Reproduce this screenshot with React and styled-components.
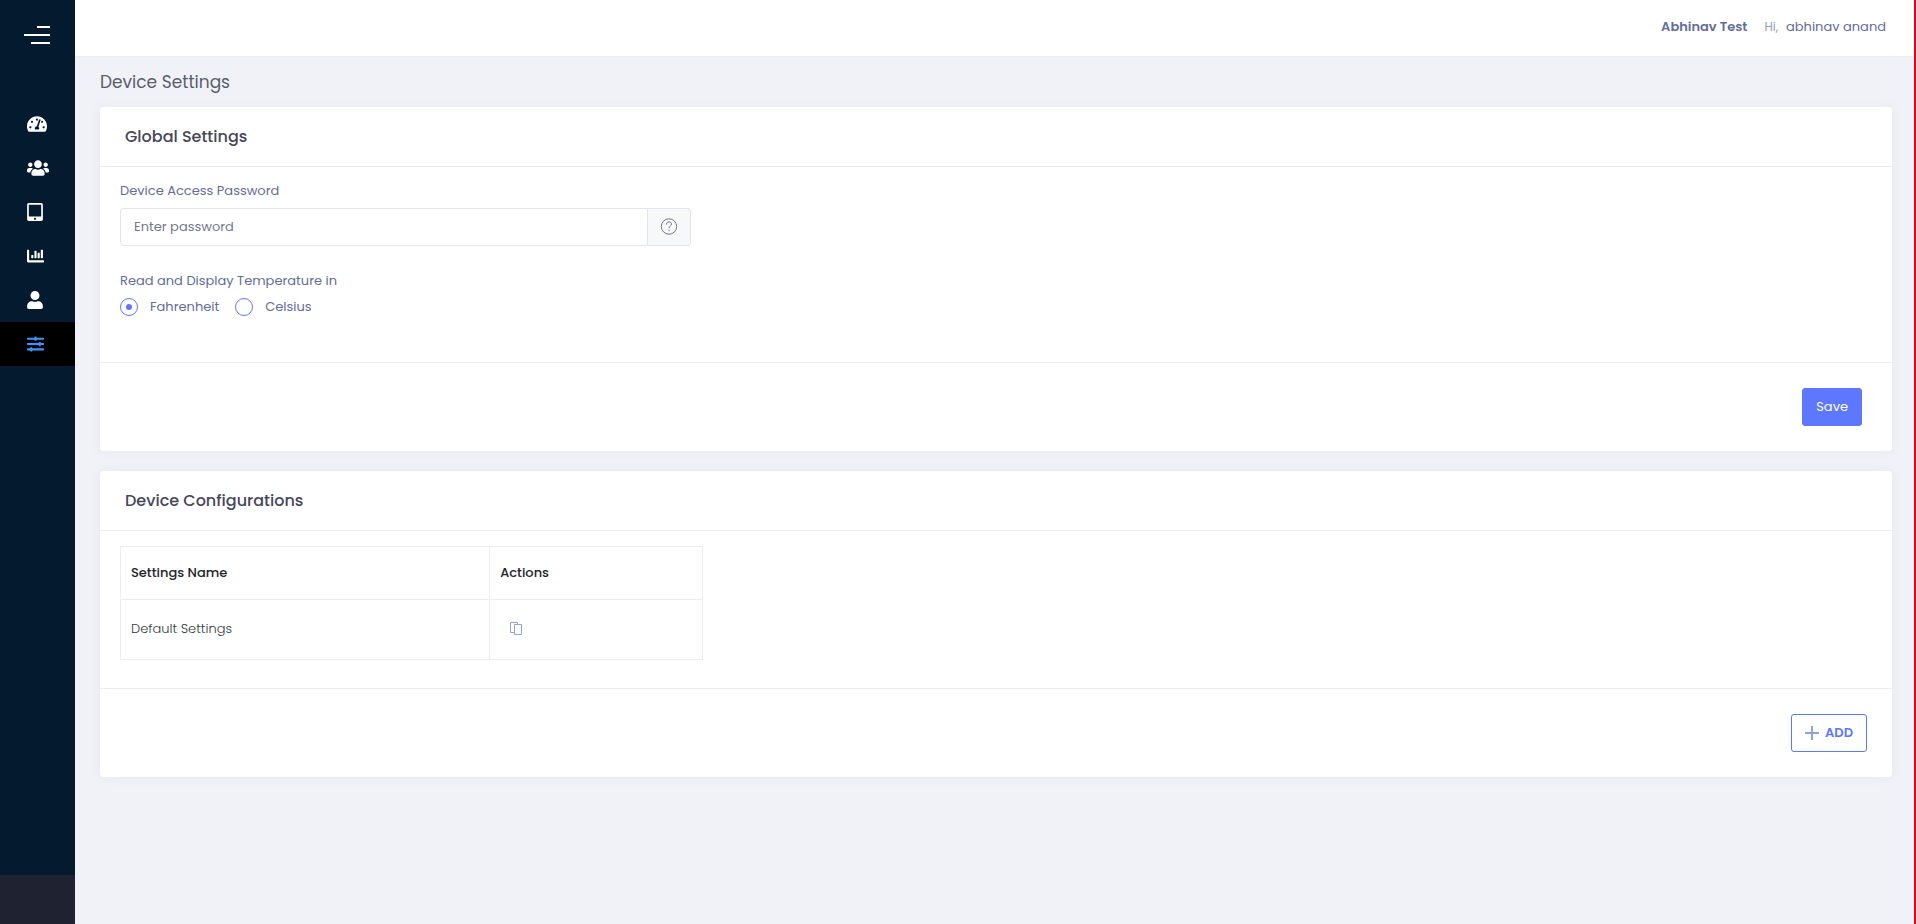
import React, { useState } from 'react';
import styled, { createGlobalStyle } from 'styled-components';
import {
  FaTachometerAlt,
  FaUsers,
  FaTabletAlt,
  FaChartBar,
  FaUser,
  FaSlidersH,
} from 'react-icons/fa';

const menuItems = [
  { id: 'dashboard', label: 'Dashboard', Icon: FaTachometerAlt, width: 20 },
  { id: 'users', label: 'Users', Icon: FaUsers, width: 22 },
  { id: 'devices', label: 'Devices', Icon: FaTabletAlt, width: 16 },
  { id: 'reports', label: 'Reports', Icon: FaChartBar, width: 17 },
  { id: 'profile', label: 'Profile', Icon: FaUser, width: 16 },
  { id: 'settings', label: 'Device Settings', Icon: FaSlidersH, width: 17 },
];

const units = ['Fahrenheit', 'Celsius'];

const configurations = [{ id: 1, name: 'Default Settings' }];

function Sidebar({ current }) {
  return (
    <StAside>
      <StToggleBtn type="button" aria-label="Toggle menu">
        <StBar $width={13} />
        <StBar $width={26} />
        <StBar $width={19} />
      </StToggleBtn>
      <StNav>
        {menuItems.map(({ id, label, Icon, width }) => (
          <StNavLink
            key={id}
            href={`#${id}`}
            aria-label={label}
            $active={id === current}
            $iconWidth={width}
          >
            <Icon />
          </StNavLink>
        ))}
      </StNav>
      <StAsideFooter />
    </StAside>
  );
}

function GlobalSettings() {
  const [password, setPassword] = useState('');
  const [unit, setUnit] = useState('Fahrenheit');

  return (
    <StCard>
      <StCardHead>
        <StCardTitle>Global Settings</StCardTitle>
      </StCardHead>
      <StForm>
        <StLabel htmlFor="password">Device Access Password</StLabel>
        <StInputGroup>
          <StInput
            id="password"
            type="password"
            placeholder="Enter password"
            value={password}
            onChange={(e) => setPassword(e.target.value)}
          />
          <StHelpBtn type="button" aria-label="Help">
            <svg width="18" height="18" viewBox="0 0 18 18" fill="none" stroke="currentColor">
              <circle cx="9" cy="8.5" r="7.7" />
              <path d="M6.5 6.7V6.1C6.5 4.7 7.5 3.9 9 3.9s2.5.8 2.5 2.1c0 1.9-2.5 1.9-2.5 4.3M9 11.7v1.5" />
            </svg>
          </StHelpBtn>
        </StInputGroup>
        <StFieldset>
          <StLegend>Read and Display Temperature in</StLegend>
          <StRadioList>
            {units.map((item) => (
              <StRadioLabel key={item}>
                <StRadio
                  type="radio"
                  name="unit"
                  checked={unit === item}
                  onChange={() => setUnit(item)}
                />
                {item}
              </StRadioLabel>
            ))}
          </StRadioList>
        </StFieldset>
      </StForm>
      <StCardFoot $right={30}>
        <StSaveBtn type="button">Save</StSaveBtn>
      </StCardFoot>
    </StCard>
  );
}

function DeviceConfigurations() {
  return (
    <StCard>
      <StCardHead>
        <StCardTitle>Device Configurations</StCardTitle>
      </StCardHead>
      <StTableWrap>
        <StTable>
          <thead>
            <tr>
              <StTh $width="63.4%">Settings Name</StTh>
              <StTh>Actions</StTh>
            </tr>
          </thead>
          <tbody>
            {configurations.map((item) => (
              <tr key={item.id}>
                <StTd>{item.name}</StTd>
                <StTd>
                  <StCopyBtn type="button" aria-label="Copy">
                    <svg width="14" height="13" viewBox="0 0 14 13" fill="none" stroke="currentColor">
                      <path d="M5 10.5H1.5V.5h7v2" />
                      <path d="M5.5 2.5h7v10h-7z" />
                    </svg>
                  </StCopyBtn>
                </StTd>
              </tr>
            ))}
          </tbody>
        </StTable>
      </StTableWrap>
      <StCardFoot $right={25}>
        <StAddBtn type="button">
          <svg width="14" height="14" viewBox="0 0 14 14" stroke="#93a2dd" strokeWidth="2">
            <path d="M0 7h14M7 0v14" />
          </svg>
          ADD
        </StAddBtn>
      </StCardFoot>
    </StCard>
  );
}

function App() {
  return (
    <StPage>
      <GlobalStyle />
      <Sidebar current="settings" />
      <StMain>
        <StTopbar>
          <StCompany>Abhinav Test</StCompany>
          <StHi>Hi,</StHi>
          <StUser>abhinav anand</StUser>
        </StTopbar>
        <StContent>
          <StPageTitle>Device Settings</StPageTitle>
          <StCards>
            <GlobalSettings />
            <DeviceConfigurations />
          </StCards>
        </StContent>
      </StMain>
    </StPage>
  );
}

export default App;

const GlobalStyle = createGlobalStyle`
  * {
    box-sizing: border-box;
  }

  body {
    margin: 0;
    background-color: #f0f2f7;
    font-family: Poppins, Inter, sans-serif;
    font-size: 13px;
    font-weight: 400;
    line-height: 20px;
    color: #646c9a;
  }

  button,
  input {
    font: inherit;
  }
`;

const StPage = styled.div`
  display: flex;
  min-height: 100vh;
  border-right: 2px solid #d90a1c;
`;

const StAside = styled.aside`
  display: flex;
  flex-direction: column;
  flex: none;
  width: 75px;
  background-color: #041b2f;
`;

const StToggleBtn = styled.button`
  display: flex;
  flex-direction: column;
  align-items: flex-end;
  gap: 6px;
  margin: 26px 25px 58px 24px;
  padding: 0;
  border: none;
  background: none;
  cursor: pointer;
`;

const StBar = styled.span`
  width: ${({ $width }) => $width}px;
  height: 2px;
  background-color: white;
`;

const StNav = styled.nav`
  display: flex;
  flex-direction: column;
  flex: 1;
`;

const StNavLink = styled.a`
  display: flex;
  align-items: center;
  height: 44px;
  padding: 0 0 1px 27px;
  color: ${({ $active }) => ($active ? '#3b97ff' : 'white')};
  background-color: ${({ $active }) => ($active ? 'black' : 'transparent')};

  svg {
    width: ${({ $iconWidth }) => $iconWidth}px;
    height: 18px;
  }
`;

const StAsideFooter = styled.div`
  height: 49px;
  background-color: #1f2230;
`;

const StMain = styled.div`
  flex: 1;
  min-width: 0;
`;

const StTopbar = styled.header`
  display: flex;
  justify-content: flex-end;
  height: 57px;
  padding: 17px 28px 0 0;
  background-color: white;
  border-bottom: 1px solid #ebedf2;
`;

const StCompany = styled.span`
  margin-right: 17px;
  font-weight: 600;
`;

const StHi = styled.span`
  margin-right: 8px;
  font-size: 12px;
  color: #959cb6;
`;

const StUser = styled.span`
  color: #646c9a;
`;

const StContent = styled.main`
  padding: 0 22px 0 25px;
`;

const StPageTitle = styled.h1`
  margin: 0;
  font-size: 17px;
  font-weight: 400;
  line-height: 50px;
  color: #595d6e;
`;

const StCards = styled.div`
  display: flex;
  flex-direction: column;
  gap: 20px;
`;

const StCard = styled.section`
  background-color: white;
  border-radius: 4px;
  box-shadow: 0 0 13px rgba(82, 63, 105, 0.05);
`;

const StCardHead = styled.div`
  padding: 0 25px;
  border-bottom: 1px solid #ebedf2;
`;

const StCardTitle = styled.h2`
  margin: 0;
  font-size: 16px;
  font-weight: 500;
  line-height: 59px;
  color: #48465b;
`;

const StForm = styled.form`
  padding: 14px 20px 45px;
`;

const StLabel = styled.label`
  display: block;
  margin-bottom: 7px;
`;

const StInputGroup = styled.div`
  display: flex;
  width: calc(33.333% - 13px);
  height: 38px;
  margin-bottom: 25px;
`;

const StInput = styled.input`
  flex: 1;
  min-width: 0;
  padding: 0 13px;
  border: 1px solid #e2e5ec;
  border-radius: 4px 0 0 4px;
  color: #495057;

  &::placeholder {
    color: #74788d;
    opacity: 1;
  }
`;

const StHelpBtn = styled.button`
  display: flex;
  align-items: center;
  justify-content: center;
  width: 43px;
  padding: 0;
  border: 1px solid #e2e5ec;
  border-left: none;
  border-radius: 0 4px 4px 0;
  background-color: #f7f8fa;
  color: #74788d;
`;

const StFieldset = styled.fieldset`
  margin: 0;
  padding: 0;
  border: none;
`;

const StLegend = styled.legend`
  margin-bottom: 6px;
  padding: 0;
`;

const StRadioList = styled.div`
  display: flex;
  gap: 16px;
`;

const StRadioLabel = styled.label`
  display: flex;
  align-items: center;
  gap: 12px;
  cursor: pointer;
`;

const StRadio = styled.input`
  appearance: none;
  display: grid;
  place-content: center;
  width: 18px;
  height: 18px;
  margin: 0;
  border: 1px solid #5d78ff;
  border-radius: 50%;

  &:checked::before {
    content: '';
    width: 6px;
    height: 6px;
    border-radius: 50%;
    background-color: #5d78ff;
  }
`;

const StCardFoot = styled.div`
  display: flex;
  justify-content: flex-end;
  padding: 25px ${({ $right }) => $right}px 25px 25px;
  border-top: 1px solid #ebedf2;
`;

const StBtn = styled.button`
  display: flex;
  align-items: center;
  height: 38px;
  padding: 0 13px;
  border: 1px solid #5d78ff;
  border-radius: 3px;
  cursor: pointer;
`;

const StSaveBtn = styled(StBtn)`
  background-color: #5d78ff;
  color: white;
`;

const StAddBtn = styled(StBtn)`
  gap: 6px;
  background-color: white;
  color: #5d78ff;
  font-weight: 600;
`;

const StTableWrap = styled.div`
  padding: 15px 20px 28px;
`;

const StTable = styled.table`
  width: 33.3%;
  border-collapse: collapse;
  table-layout: fixed;
  text-align: left;
`;

const StTh = styled.th`
  width: ${({ $width }) => $width || 'auto'};
  height: 53px;
  padding: 0 10px;
  border: 1px solid #ebedf2;
  font-weight: 500;
  color: #212529;
`;

const StTd = styled.td`
  height: 60px;
  padding: 0 10px 2px;
  border: 1px solid #ebedf2;
  font-weight: 300;
  color: #343a40;
`;

const StCopyBtn = styled.button`
  display: flex;
  padding: 0 9px;
  border: none;
  background: none;
  color: #93a2dd;
  cursor: pointer;
`;
